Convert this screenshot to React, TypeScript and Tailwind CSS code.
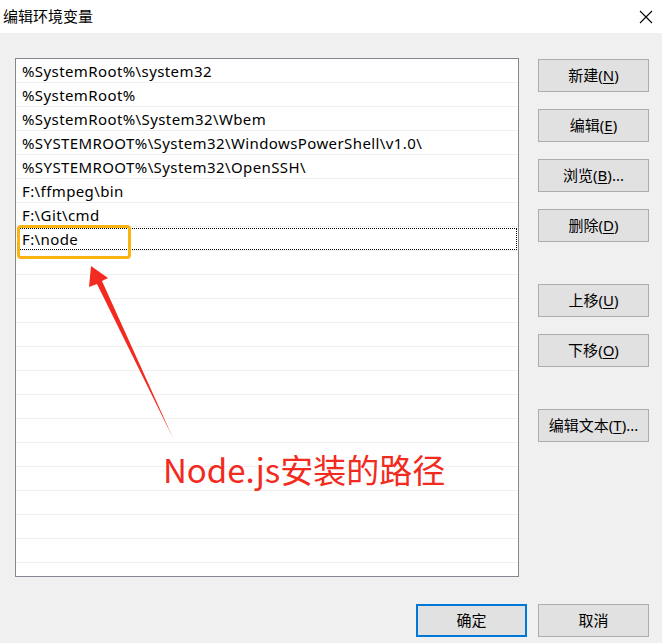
import React from "react";

const paths = [
  "%SystemRoot%\\system32",
  "%SystemRoot%",
  "%SystemRoot%\\System32\\Wbem",
  "%SYSTEMROOT%\\System32\\WindowsPowerShell\\v1.0\\",
  "%SYSTEMROOT%\\System32\\OpenSSH\\",
  "F:\\ffmpeg\\bin",
  "F:\\Git\\cmd",
  "F:\\node",
];

const rows = [...paths, ...Array(14).fill("")];

const font = { fontFamily: '"Noto Sans", "Noto Sans CJK SC", sans-serif' };

interface BtnProps {
  label: string;
  mnemonic?: string;
  suffix?: string;
  primary?: boolean;
}

const DialogButton: React.FC<BtnProps> = ({ label, mnemonic, suffix, primary }) => {
  return (
    <button
      className={
        "w-[111px] h-[33px] flex items-center justify-center bg-[#e1e1e1] text-[15px] text-black " +
        (primary ? "border-2 border-[#0078d7]" : "border border-[#adadad]")
      }
    >
      <span>{label}</span>
      {mnemonic && (
        <span>
          (<span className="underline underline-offset-2">{mnemonic}</span>)
        </span>
      )}
      {suffix && <span>{suffix}</span>}
    </button>
  );
};

const App: React.FC = () => {
  return (
    <div className="w-[662px] h-[643px] bg-[#f0f0f0] flex flex-col overflow-hidden" style={font}>
      <div className="h-[33px] bg-white flex items-center justify-between pl-[3px] pr-[9px] shrink-0">
        <span className="text-[15px] text-black leading-none">编辑环境变量</span>
        <svg width="14" height="14" viewBox="0 0 14 14">
          <path d="M1 1 L13 13 M13 1 L1 13" stroke="#000" strokeWidth="1.1" fill="none" />
        </svg>
      </div>

      <div className="flex pt-[25px] pl-[15px]">
        <div className="relative w-[504px] h-[519px] border border-[#828790] bg-white overflow-hidden">
          {rows.map((p, i) => (
            <div
              key={i}
              className={
                "h-[24px] border-b border-[#f0f0f0] flex items-center pl-[6px] pt-[2px] text-[15px] tracking-[0.4px] text-black " +
                (i === 7 ? "outline-1 outline-dotted outline-black -outline-offset-2" : "")
              }
            >
              {p}
            </div>
          ))}

          <div className="absolute left-[1px] top-[166px] w-[114px] h-[34px] border-[3px] border-[#fbb30f] rounded-[4px]" />

          <svg className="absolute left-0 top-0" width="504" height="519" viewBox="15 58 504 519">
            <polygon
              points="90,265 107,277 101,280 172,437 96,283 88,286"
              fill="#f22a20"
            />
          </svg>

          <div
            className="absolute left-[147px] top-[394px] text-[33px] leading-none text-[#f22a20] whitespace-nowrap"
            style={{ fontFamily: '"Noto Sans CJK SC", sans-serif' }}
          >
            Node.js安装的路径
          </div>
        </div>

        <div className="flex flex-col ml-[19px] pt-[1px]">
          <div className="flex flex-col gap-[17px]">
            <DialogButton label="新建" mnemonic="N" />
            <DialogButton label="编辑" mnemonic="E" />
            <DialogButton label="浏览" mnemonic="B" suffix="..." />
            <DialogButton label="删除" mnemonic="D" />
          </div>
          <div className="flex flex-col gap-[17px] mt-[42px]">
            <DialogButton label="上移" mnemonic="U" />
            <DialogButton label="下移" mnemonic="O" />
          </div>
          <div className="mt-[42px]">
            <DialogButton label="编辑文本" mnemonic="T" suffix="..." />
          </div>
        </div>
      </div>

      <div className="flex justify-end gap-[11px] pr-[13px] mt-[27px]">
        <DialogButton label="确定" primary />
        <DialogButton label="取消" />
      </div>
    </div>
  );
};

export default App;
